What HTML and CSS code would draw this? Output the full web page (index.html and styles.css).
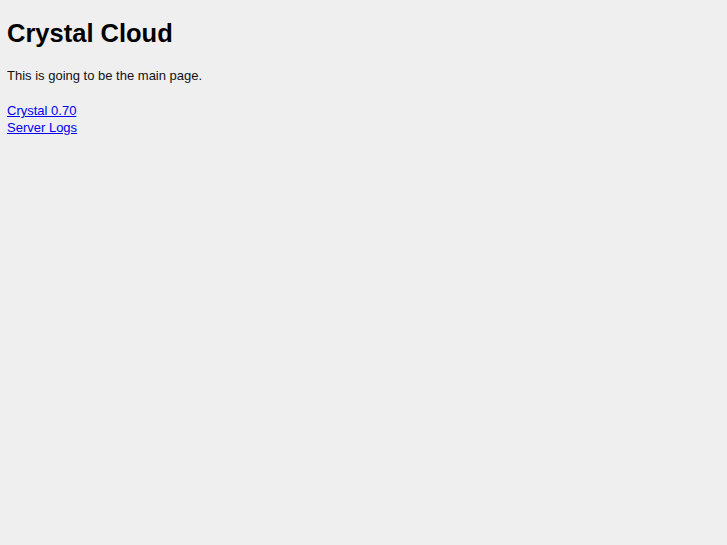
FILE: index.html
```html
<!DOCTYPE html>
<html lang="en">
<head>
  <meta charset="UTF-8">
  <title>Crystal Cloud</title>
  <link rel="stylesheet" href="styles.css">
</head>
<body>
  <h1>Crystal Cloud</h1>
  <p>This is going to be the main page.</p>
  <p class="links">
    <a href="#">Crystal 0.70</a><br>
    <a href="#">Server Logs</a>
  </p>
</body>
</html>
```

FILE: styles.css
```css
body {
  font-family: 'Liberation Sans', Arial, sans-serif;
  font-size: 13px;
  line-height: 17px;
  background-color: #efefef;
  color: #111;
  margin: 8px 7px;
}
h1 {
  font-size: 25.5px;
  line-height: 30px;
  color: #000;
  margin: 10px 0 19px;
}
p {
  margin: 18px 0;
}
a {
  color: #0000ee;
}
```
